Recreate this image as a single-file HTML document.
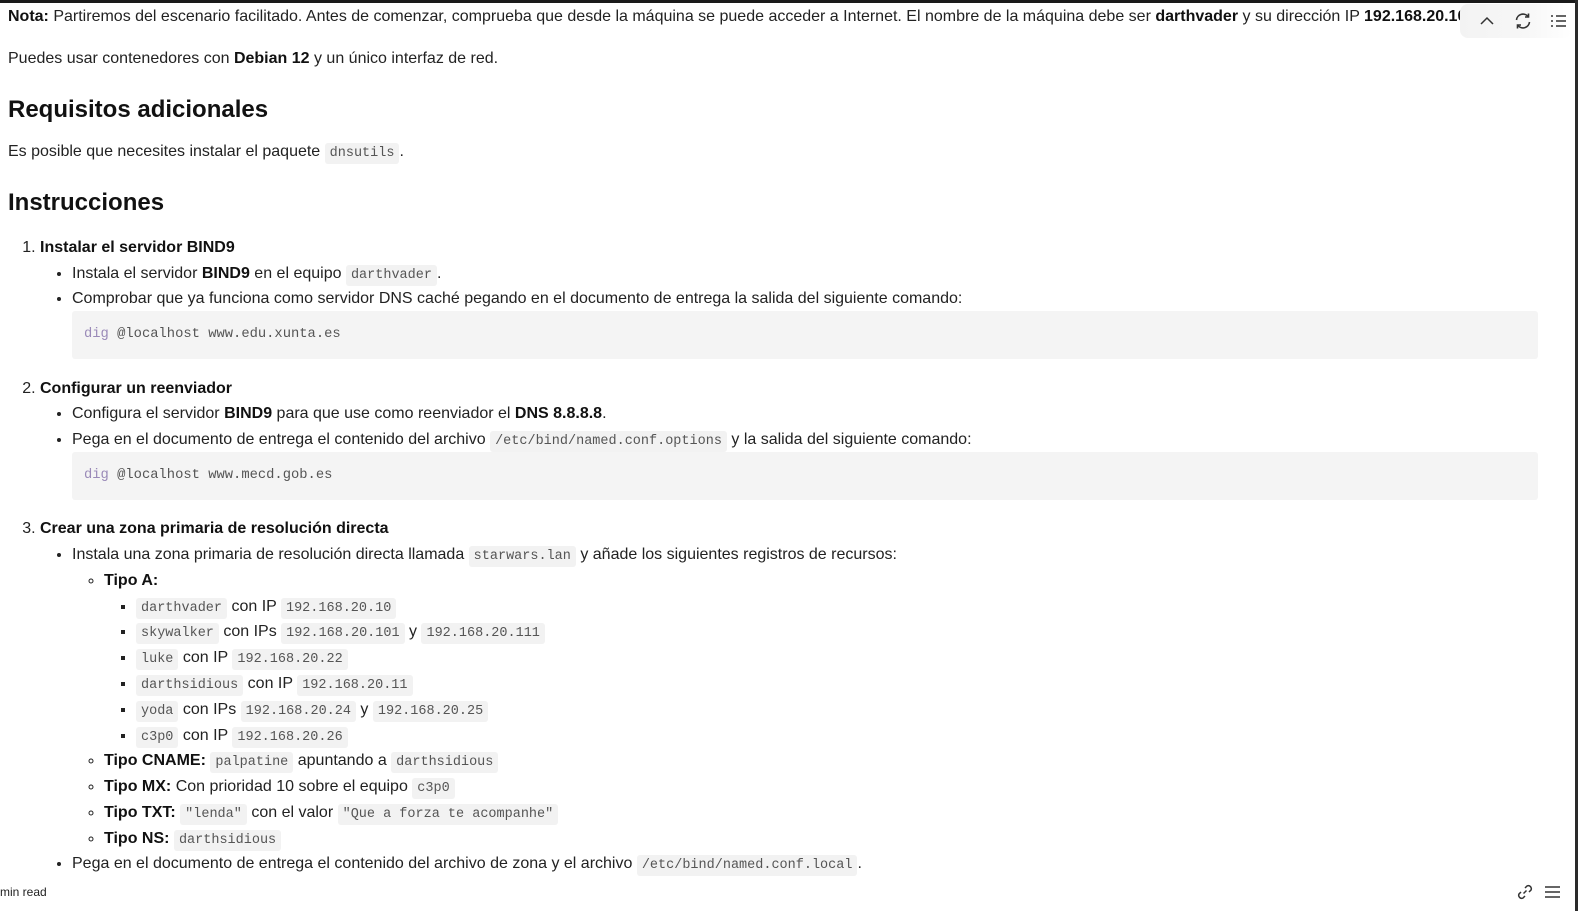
<!DOCTYPE html>
<html><head><meta charset="utf-8"><style>
*{box-sizing:border-box}
html,body{margin:0;padding:0;width:1578px;height:911px;overflow:hidden;background:#fff}
body{font-family:"Liberation Sans",Arial,sans-serif;font-size:16px;color:#222;position:relative}
#top{position:absolute;left:0;top:0;width:1578px;height:3px;background:#1a1a1a}
#rb{position:absolute;right:0;top:0;width:3px;height:911px;background:#2a2a2a}
#content{position:absolute;left:8px;top:4px;width:1530px;height:875px;overflow:hidden}
p{margin:0 0 16px;line-height:26px}
h2{font-size:24px;margin:23px 0 14px;line-height:30px;color:#111}
b{color:#111}
ol{margin:17px 0 0;padding-left:32px}
ol>li{line-height:25.7px}
ul{margin:0;padding-left:32px;list-style:disc}
ul ul{list-style:circle;padding-left:32px}
ul ul ul{list-style:square;padding-left:32px}
li{line-height:25.7px}
ol>li:nth-child(3) li{line-height:25.8px}
code{font-family:"Liberation Mono",monospace;font-size:13.5px;line-height:1;background:#f2f2f2;padding:3px 5px;border-radius:3px;color:#555}
pre{margin:-1px 0 16.5px;background:#f4f4f4;height:48px;padding:0 12px;line-height:47px;font-family:"Liberation Mono",monospace;font-size:13.8px;color:#555;border-radius:3px}
.k{color:#9a8ab8}
#tb{position:absolute;left:1460px;top:4px;width:112px;height:34px;border-radius:8px;background:linear-gradient(90deg,#f3f3f3,#f7f7f7 60%,#fff)}
#foot{position:absolute;left:0;top:879px;width:1575px;height:32px;background:#fff;font-size:12px;color:#222}
</style></head><body>
<div id="content">
<p><b>Nota:</b> Partiremos del escenario facilitado. Antes de comenzar, comprueba que desde la máquina se puede acceder a Internet. El nombre de la máquina debe ser <b>darthvader</b> y su dirección IP <b>192.168.20.10/24</b></p>
<p>Puedes usar contenedores con <b>Debian 12</b> y un único interfaz de red.</p>
<h2>Requisitos adicionales</h2>
<p>Es posible que necesites instalar el paquete <code>dnsutils</code>.</p>
<h2>Instrucciones</h2>
<ol>
<li><b>Instalar el servidor BIND9</b>
<ul><li>Instala el servidor <b>BIND9</b> en el equipo <code>darthvader</code>.</li>
<li>Comprobar que ya funciona como servidor DNS caché pegando en el documento de entrega la salida del siguiente comando:
<pre><span class="k">dig</span> @localhost www.edu.xunta.es</pre></li></ul></li>
<li><b>Configurar un reenviador</b>
<ul><li>Configura el servidor <b>BIND9</b> para que use como reenviador el <b>DNS 8.8.8.8</b>.</li>
<li>Pega en el documento de entrega el contenido del archivo <code>/etc/bind/named.conf.options</code> y la salida del siguiente comando:
<pre><span class="k">dig</span> @localhost www.mecd.gob.es</pre></li></ul></li>
<li><b>Crear una zona primaria de resolución directa</b>
<ul><li>Instala una zona primaria de resolución directa llamada <code>starwars.lan</code> y añade los siguientes registros de recursos:
<ul><li><b>Tipo A:</b>
<ul><li><code>darthvader</code> con IP <code>192.168.20.10</code></li>
<li><code>skywalker</code> con IPs <code>192.168.20.101</code> y <code>192.168.20.111</code></li>
<li><code>luke</code> con IP <code>192.168.20.22</code></li>
<li><code>darthsidious</code> con IP <code>192.168.20.11</code></li>
<li><code>yoda</code> con IPs <code>192.168.20.24</code> y <code>192.168.20.25</code></li>
<li><code>c3p0</code> con IP <code>192.168.20.26</code></li></ul></li>
<li><b>Tipo CNAME:</b> <code>palpatine</code> apuntando a <code>darthsidious</code></li>
<li><b>Tipo MX:</b> Con prioridad 10 sobre el equipo <code>c3p0</code></li>
<li><b>Tipo TXT:</b> <code>"lenda"</code> con el valor <code>"Que a forza te acompanhe"</code></li>
<li><b>Tipo NS:</b> <code>darthsidious</code></li></ul></li>
<li>Pega en el documento de entrega el contenido del archivo de zona y el archivo <code>/etc/bind/named.conf.local</code>.</li></ul></li>
<li><b>Crear una zona de resolución inversa</b></li>
</ol>
</div>
<div id="top"></div>
<div id="tb"></div>
<svg style="position:absolute;left:1478px;top:12px" width="18" height="18" viewBox="0 0 18 18"><path d="M3 12 L9 6 L15 12" fill="none" stroke="#333" stroke-width="1.5"/></svg>
<svg style="position:absolute;left:1513px;top:11px" width="20" height="20" viewBox="0 0 20 20" fill="none" stroke="#333" stroke-width="1.6"><path d="M3.5 9 A6.5 6.5 0 0 1 15 5.5"/><path d="M15.5 2.5 V6 H12"/><path d="M16.5 11 A6.5 6.5 0 0 1 5 14.5"/><path d="M4.5 17.5 V14 H8"/></svg>
<svg style="position:absolute;left:1550px;top:13px" width="18" height="16" viewBox="0 0 18 16" fill="none" stroke="#333" stroke-width="1.5"><path d="M1 3h2M6 3h10M1 8h2M6 8h10M1 13h2M6 13h10"/></svg>
<div id="foot"><span style="position:absolute;left:0;top:6px">min read</span>
<svg style="position:absolute;left:1515px;top:3px" width="20" height="20" viewBox="0 0 20 20" fill="none" stroke="#333" stroke-width="1.5"><path d="M8.5 11.5 L11.5 8.5"/><path d="M10 6 L12 4 A3 3 0 0 1 16 8 L14 10"/><path d="M10 14 L8 16 A3 3 0 0 1 4 12 L6 10"/></svg>
<svg style="position:absolute;left:1544px;top:6px" width="17" height="14" viewBox="0 0 17 14" fill="none" stroke="#333" stroke-width="1.5"><path d="M1 2h15M1 7h15M1 12h15"/></svg>
</div>
<div id="rb"></div>
</body></html>
